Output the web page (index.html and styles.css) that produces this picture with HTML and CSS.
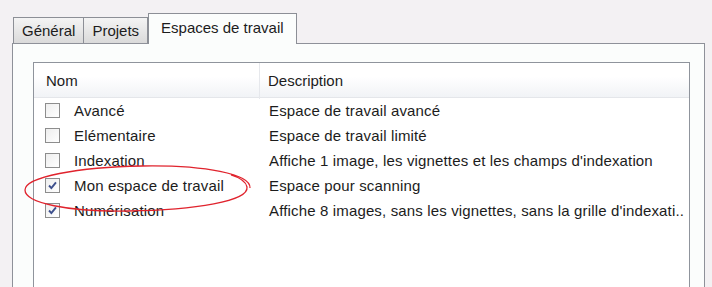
FILE: index.html
```html
<!DOCTYPE html>
<html lang="fr">
<head>
    <meta charset="UTF-8">
    <meta name="viewport" content="width=device-width, initial-scale=1.0">
    <title>Espaces de travail</title>
    <link rel="stylesheet" href="styles.css">
</head>
<body>
    <div class="window">
        <div class="tabs">
            <div class="tab">Général</div>
            <div class="tab">Projets</div>
            <div class="tab active">Espaces de travail</div>
        </div>
        <div class="panel">
            <div class="list">
                <div class="list-head">
                    <div class="col-name">Nom</div>
                    <div class="col-desc">Description</div>
                </div>
                <div class="row">
                    <div class="col-name"><span class="check"></span>Avancé</div>
                    <div class="col-desc">Espace de travail avancé</div>
                </div>
                <div class="row">
                    <div class="col-name"><span class="check"></span>Elémentaire</div>
                    <div class="col-desc">Espace de travail limité</div>
                </div>
                <div class="row">
                    <div class="col-name"><span class="check"></span>Indexation</div>
                    <div class="col-desc">Affiche 1 image, les vignettes et les champs d'indexation</div>
                </div>
                <div class="row">
                    <div class="col-name"><span class="check checked"><svg viewBox="0 0 15 15"><path d="M3.5 7.5 L6.2 10.5 L11.5 3.8"/></svg></span>Mon espace de travail</div>
                    <div class="col-desc">Espace pour scanning</div>
                </div>
                <div class="row">
                    <div class="col-name"><span class="check checked"><svg viewBox="0 0 15 15"><path d="M3.5 7.5 L6.2 10.5 L11.5 3.8"/></svg></span>Numérisation</div>
                    <div class="col-desc">Affiche 8 images, sans les vignettes, sans la grille d'indexati..</div>
                </div>
            </div>
        </div>

        <!-- red hand-drawn circle around the selected workspace -->
        <svg class="annotation" width="712" height="287" viewBox="0 0 712 287">
            <path d="M250 188 C251 174 205 165 142 166 C78 167 25 177 25 190 C25 203 68 212 128 211 C196 210 249 201 247 187 C246 182 241 178 231 175"/>
        </svg>
    </div>
</body>
</html>
```

FILE: styles.css
```css
body {
    margin: 0;
    background-color: #f3f1f3;
    font-family: "Liberation Sans", Arial, sans-serif;
    font-size: 15px;
    color: #1c1c1c;
    overflow: hidden;
}

.window {
    position: relative;
    height: 287px;
    padding-top: 13px;
    box-sizing: border-box;
}

.tabs {
    display: flex;
    align-items: flex-end;
    padding-left: 13px;
    position: relative;
    z-index: 1;
}

.tab {
    height: 25px;
    line-height: 26px;
    padding: 0 8px;
    border: 1px solid #8c8f96;
    border-bottom: none;
    background: linear-gradient(#f4f4f4, #dadada);
    margin-right: -1px;
}

.tab.active {
    height: 30px;
    line-height: 27px;
    padding: 0 12px;
    margin-left: 1px;
    background: #fbfdfc;
    margin-bottom: -1px;
}

.panel {
    margin-left: 12px;
    width: 693px;
    height: 260px;
    border: 1px solid #8e9199;
    background-color: #fbfdfc;
    padding: 18px 14px 0 20px;
    box-sizing: border-box;
}

.list {
    height: 260px;
    border: 1px solid #8f949c;
    background-color: #fff;
}

.list-head,
.row {
    display: grid;
    grid-template-columns: 226px 1fr;
}

.list-head {
    height: 34px;
    line-height: 36px;
    background: linear-gradient(#ffffff 40%, #f1f3f6);
    border-bottom: 1px solid #e4e6ea;
}

.list-head .col-name {
    padding-left: 12px;
    border-right: 1px solid #e6e8ec;
}

.list-head .col-desc {
    padding-left: 8px;
}

.row {
    height: 25px;
    align-items: center;
    letter-spacing: 0.15px;
}

.row .col-name {
    display: flex;
    align-items: center;
    padding-left: 11px;
}

.row .col-desc {
    padding-left: 9px;
    white-space: nowrap;
}

.check {
    width: 13px;
    height: 13px;
    border: 1px solid #8d8d8d;
    background: linear-gradient(135deg, #eeeeee, #ffffff);
    margin-right: 14px;
    display: inline-flex;
}

.check svg {
    width: 13px;
    height: 13px;
}

.check svg path {
    fill: none;
    stroke: #3d4f8c;
    stroke-width: 2.2;
}

.annotation {
    position: absolute;
    left: 0;
    top: 0;
    pointer-events: none;
    z-index: 2;
}

.annotation path {
    fill: none;
    stroke: #e0232d;
    stroke-width: 1.3;
}
```
